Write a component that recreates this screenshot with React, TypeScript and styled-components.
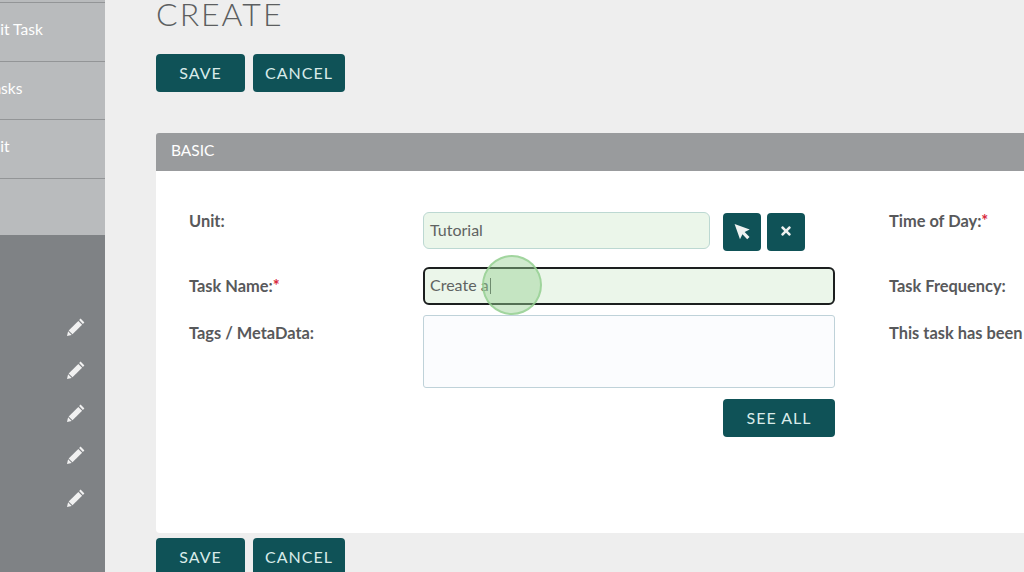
import { FaTimes } from "react-icons/fa";
import styled, { createGlobalStyle } from "styled-components";

const GlobalStyle = createGlobalStyle`
  html, body {
    margin: 0;
    padding: 0;
    background: #eeeeee;
  }
  body {
    font-family: Lato, "Open Sans", sans-serif;
    color: #58595b;
  }
`;

const Page = styled.div`
  display: flex;
  width: 1024px;
  height: 572px;
  overflow: hidden;
`;

const Sidebar = styled.aside`
  flex: 0 0 105px;
  display: flex;
  flex-direction: column;
  background: #7f8285;
  overflow: hidden;
`;

const Menu = styled.nav`
  height: 235px;
  padding-top: 2px;
  box-sizing: border-box;
  background: #b9bbbd;
`;

const MenuRow = styled.div<{ $height: number }>`
  height: ${p => p.$height}px;
  box-sizing: border-box;
  border-top: 1.5px solid #939597;
  padding-top: 15.5px;
  font-size: 15.5px;
  line-height: 20px;
  color: #ffffff;
  white-space: nowrap;
`;

const MenuLabel = styled.span<{ $shift: number }>`
  display: block;
  margin-left: ${p => p.$shift}px;
`;

const Pencils = styled.div`
  display: flex;
  flex-direction: column;
  align-items: flex-end;
  gap: 24.8px;
  padding: 83px 20px 0 0;
`;

const PencilIcon = () => (
  <svg width="18" height="18" viewBox="0 0 18 18" fill="#f1f1f1" style={{ display: "block" }}>
    <path d="M13.6 0.6 L17.4 4.4 L15.9 5.9 L12.1 2.1 Z" />
    <path d="M11.3 2.9 L15.1 6.7 L5.5 16.2 L1.7 12.4 Z" />
    <path d="M1.1 13.3 L4.7 16.9 L0 18 Z" />
  </svg>
);

const Main = styled.main`
  flex: 1;
  min-width: 0;
  padding-left: 51px;
`;

const Title = styled.h1`
  margin: 0;
  font-size: 32px;
  line-height: 27px;
  font-weight: 300;
  letter-spacing: 2px;
  color: #5c5e60;
`;

const ButtonBar = styled.div<{ $top: number }>`
  display: flex;
  gap: 8px;
  margin-top: ${p => p.$top}px;
`;

const Button = styled.button<{ $width: number }>`
  width: ${p => p.$width}px;
  height: 38px;
  padding: 0 0 2px;
  flex: none;
  border: 0;
  border-radius: 4px;
  background: #0f5257;
  color: #d9ebe9;
  font-family: inherit;
  font-size: 16px;
  letter-spacing: 1px;
`;

const IconButton = styled(Button)`
  display: flex;
  align-items: center;
  justify-content: center;
  color: #eef2f1;
`;

const Panel = styled.section`
  margin-top: 41px;
  width: 900px;
`;

const PanelHeader = styled.div`
  height: 38px;
  box-sizing: border-box;
  padding: 7px 15px 0;
  border-radius: 3px 3px 0 0;
  background: #999b9d;
  color: #ffffff;
  font-size: 15.5px;
  line-height: 20px;
`;

const PanelBody = styled.div`
  height: 362px;
  box-sizing: border-box;
  padding: 39px 0 0 33px;
  border-radius: 0 0 0 4px;
  background: #ffffff;
  display: grid;
  grid-template-columns: 234px 412px 1fr;
  grid-template-rows: 57px 48px 84px 38px;
`;

const Label = styled.label<{ $offset?: number; $indent?: boolean }>`
  margin-top: ${p => p.$offset ?? 0}px;
  margin-left: ${p => (p.$indent ? 54 : 0)}px;
  font-size: 16.4px;
  line-height: 21px;
  font-weight: 700;
  color: #58595b;
  white-space: nowrap;
`;

const Required = styled.span`
  color: #d8283c;
`;

const UnitCell = styled.div`
  display: flex;
  align-items: flex-start;
  padding-top: 2px;
`;

const Field = styled.div<{ $width?: number; $focused?: boolean }>`
  position: relative;
  width: ${p => p.$width ?? 412}px;
  flex: none;
  height: ${p => (p.$focused ? 38 : 37)}px;
  box-sizing: border-box;
  padding-left: ${p => (p.$focused ? 5 : 6)}px;
  border: ${p => (p.$focused ? "2.5px solid #1c1f1f" : "1px solid #bcd8d2")};
  border-radius: 6px;
  background: #ebf6ea;
  font-size: 16px;
  line-height: ${p => (p.$focused ? 31 : 33)}px;
  color: #5f6362;
`;

const Caret = styled.span`
  display: inline-block;
  width: 1px;
  height: 16px;
  margin-left: 1px;
  vertical-align: -3px;
  background: #4f5452;
`;

const Ripple = styled.span`
  position: absolute;
  left: 57px;
  top: -14px;
  width: 60px;
  height: 60px;
  box-sizing: border-box;
  border: 2px solid rgba(150, 208, 146, 0.8);
  border-radius: 50%;
  background: rgba(150, 208, 146, 0.45);
`;

const TextArea = styled.div`
  width: 412px;
  height: 73px;
  box-sizing: border-box;
  border: 1px solid #bfd2d9;
  border-radius: 3px;
  background: #fbfcfe;
`;

const UnitActions = styled.div`
  display: flex;
  gap: 6px;
  margin: 1px 0 0 13px;
`;

const SeeAllCell = styled.div`
  grid-column: 2;
  display: flex;
  justify-content: flex-end;
`;

const CursorIcon = () => (
  <svg width="18" height="19" viewBox="0 0 17 17" fill="#eef2f1">
    <path d="M1.5 1.5 L15.8 6.6 L11 9 L15.6 13.7 L13.4 15.9 L8.9 11.2 L6.6 15.8 Z" />
  </svg>
);

export default function App() {
  return (
    <Page>
      <GlobalStyle />
      <Sidebar>
        <Menu>
          <MenuRow $height={59}><MenuLabel $shift={-17}>Edit Task</MenuLabel></MenuRow>
          <MenuRow $height={58}><MenuLabel $shift={-14}>Tasks</MenuLabel></MenuRow>
          <MenuRow $height={59}><MenuLabel $shift={-17}>Edit</MenuLabel></MenuRow>
          <MenuRow $height={57} />
        </Menu>
        <Pencils>
          {[0, 1, 2, 3, 4].map(i => (
            <PencilIcon key={i} />
          ))}
        </Pencils>
      </Sidebar>
      <Main>
        <Title>CREATE</Title>
        <ButtonBar $top={27}>
          <Button $width={89}>SAVE</Button>
          <Button $width={92}>CANCEL</Button>
        </ButtonBar>
        <Panel>
          <PanelHeader>BASIC</PanelHeader>
          <PanelBody>
            <Label>Unit:</Label>
            <UnitCell>
              <Field $width={287}>Tutorial</Field>
              <UnitActions>
                <IconButton $width={38}><CursorIcon /></IconButton>
                <IconButton $width={38}><FaTimes size={14} /></IconButton>
              </UnitActions>
            </UnitCell>
            <Label $indent>Time of Day:<Required>*</Required></Label>

            <Label $offset={8}>Task Name:<Required>*</Required></Label>
            <Field $focused>
              Create a<Caret />
              <Ripple />
            </Field>
            <Label $indent $offset={8}>Task Frequency:</Label>

            <Label $offset={7}>Tags / MetaData:</Label>
            <TextArea />
            <Label $indent $offset={7}>This task has been</Label>

            <SeeAllCell>
              <Button $width={112}>SEE ALL</Button>
            </SeeAllCell>
          </PanelBody>
        </Panel>
        <ButtonBar $top={5}>
          <Button $width={89}>SAVE</Button>
          <Button $width={92}>CANCEL</Button>
        </ButtonBar>
      </Main>
    </Page>
  );
}
